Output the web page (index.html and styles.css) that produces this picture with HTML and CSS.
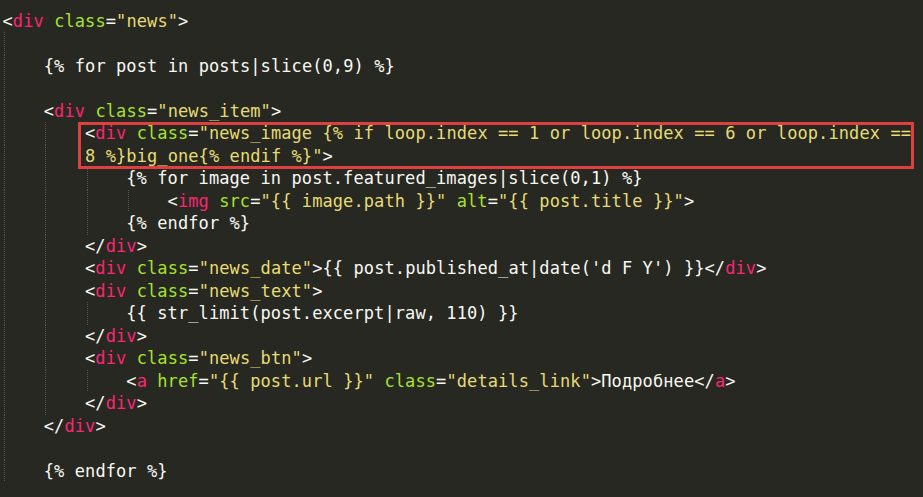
FILE: index.html
```html
<!DOCTYPE html>
<html lang="ru">
<head>
  <meta charset="UTF-8" />
  <title>news template</title>
  <link rel="stylesheet" href="styles.css">
</head>
<body>
  <div class="editor">
    <div class="line"><span class="code">&lt;<span class="t">div</span> <span class="a">class</span>=<span class="s">"news"</span>&gt;</span></div>
    <div class="line"><span class="ind"></span></div>
    <div class="line"><span class="ind"></span><span class="code">{% for post in posts|slice(0,9) %}</span></div>
    <div class="line"><span class="ind"></span></div>
    <div class="line"><span class="ind"></span><span class="code">&lt;<span class="t">div</span> <span class="a">class</span>=<span class="s">"news_item"</span>&gt;</span></div>
    <div class="mark">
      <div class="line"><span class="ind"></span><span class="ind"></span><span class="code">&lt;<span class="t">div</span> <span class="a">class</span>=<span class="s">"news_image {% if loop.index == 1 or loop.index == 6 or loop.index ==</span></span></div>
      <div class="line"><span class="ind"></span><span class="ind"></span><span class="code"><span class="s">8 %}big_one{% endif %}"</span>&gt;</span></div>
    </div>
    <div class="line"><span class="ind"></span><span class="ind"></span><span class="ind"></span><span class="code">{% for image in post.featured_images|slice(0,1) %}</span></div>
    <div class="line"><span class="ind"></span><span class="ind"></span><span class="ind"></span><span class="ind"></span><span class="code">&lt;<span class="t">img</span> <span class="a">src</span>=<span class="s">"{{ image.path }}"</span> <span class="a">alt</span>=<span class="s">"{{ post.title }}"</span>&gt;</span></div>
    <div class="line"><span class="ind"></span><span class="ind"></span><span class="ind"></span><span class="code">{% endfor %}</span></div>
    <div class="line"><span class="ind"></span><span class="ind"></span><span class="code">&lt;/<span class="t">div</span>&gt;</span></div>
    <div class="line"><span class="ind"></span><span class="ind"></span><span class="code">&lt;<span class="t">div</span> <span class="a">class</span>=<span class="s">"news_date"</span>&gt;{{ post.published_at|date('d F Y') }}&lt;/<span class="t">div</span>&gt;</span></div>
    <div class="line"><span class="ind"></span><span class="ind"></span><span class="code">&lt;<span class="t">div</span> <span class="a">class</span>=<span class="s">"news_text"</span>&gt;</span></div>
    <div class="line"><span class="ind"></span><span class="ind"></span><span class="ind"></span><span class="code">{{ str_limit(post.excerpt|raw, 110) }}</span></div>
    <div class="line"><span class="ind"></span><span class="ind"></span><span class="code">&lt;/<span class="t">div</span>&gt;</span></div>
    <div class="line"><span class="ind"></span><span class="ind"></span><span class="code">&lt;<span class="t">div</span> <span class="a">class</span>=<span class="s">"news_btn"</span>&gt;</span></div>
    <div class="line"><span class="ind"></span><span class="ind"></span><span class="ind"></span><span class="code">&lt;<span class="t">a</span> <span class="a">href</span>=<span class="s">"{{ post.url }}"</span> <span class="a">class</span>=<span class="s">"details_link"</span>&gt;Подробнее&lt;/<span class="t">a</span>&gt;</span></div>
    <div class="line"><span class="ind"></span><span class="ind"></span><span class="code">&lt;/<span class="t">div</span>&gt;</span></div>
    <div class="line"><span class="ind"></span><span class="code">&lt;/<span class="t">div</span>&gt;</span></div>
    <div class="line"><span class="ind"></span></div>
    <div class="line"><span class="ind"></span><span class="code">{% endfor %}</span></div>
  </div>
</body>
</html>
```

FILE: styles.css
```css
html, body {
  margin: 0;
  height: 100%;
  background-color: #272822;
}
.editor {
  padding: 9.75px 0 0 2.5px;
  font-family: "DejaVu Sans Mono", "Liberation Mono", monospace;
  font-size: 17px;
  letter-spacing: 0.09px;
  color: #f8f8f2;
}
.line {
  display: flex;
  height: 22.5px;
  line-height: 22.5px;
  white-space: pre;
}
.ind {
  flex: none;
  width: 41.28px;
  height: 22.5px;
  background-image: linear-gradient(to bottom, #56574f 50%, transparent 50%);
  background-size: 1px 2px;
  background-repeat: repeat-y;
  background-position: 1.5px 0;
}
.t {
  color: #f92672;
}
.a {
  color: #a6e22e;
}
.s {
  color: #e6db74;
}
.mark {
  position: relative;
}
.mark::after {
  content: "";
  position: absolute;
  top: 0;
  bottom: -2px;
  left: 75.5px;
  right: 9px;
  border: 3px solid #de4040;
}
```
